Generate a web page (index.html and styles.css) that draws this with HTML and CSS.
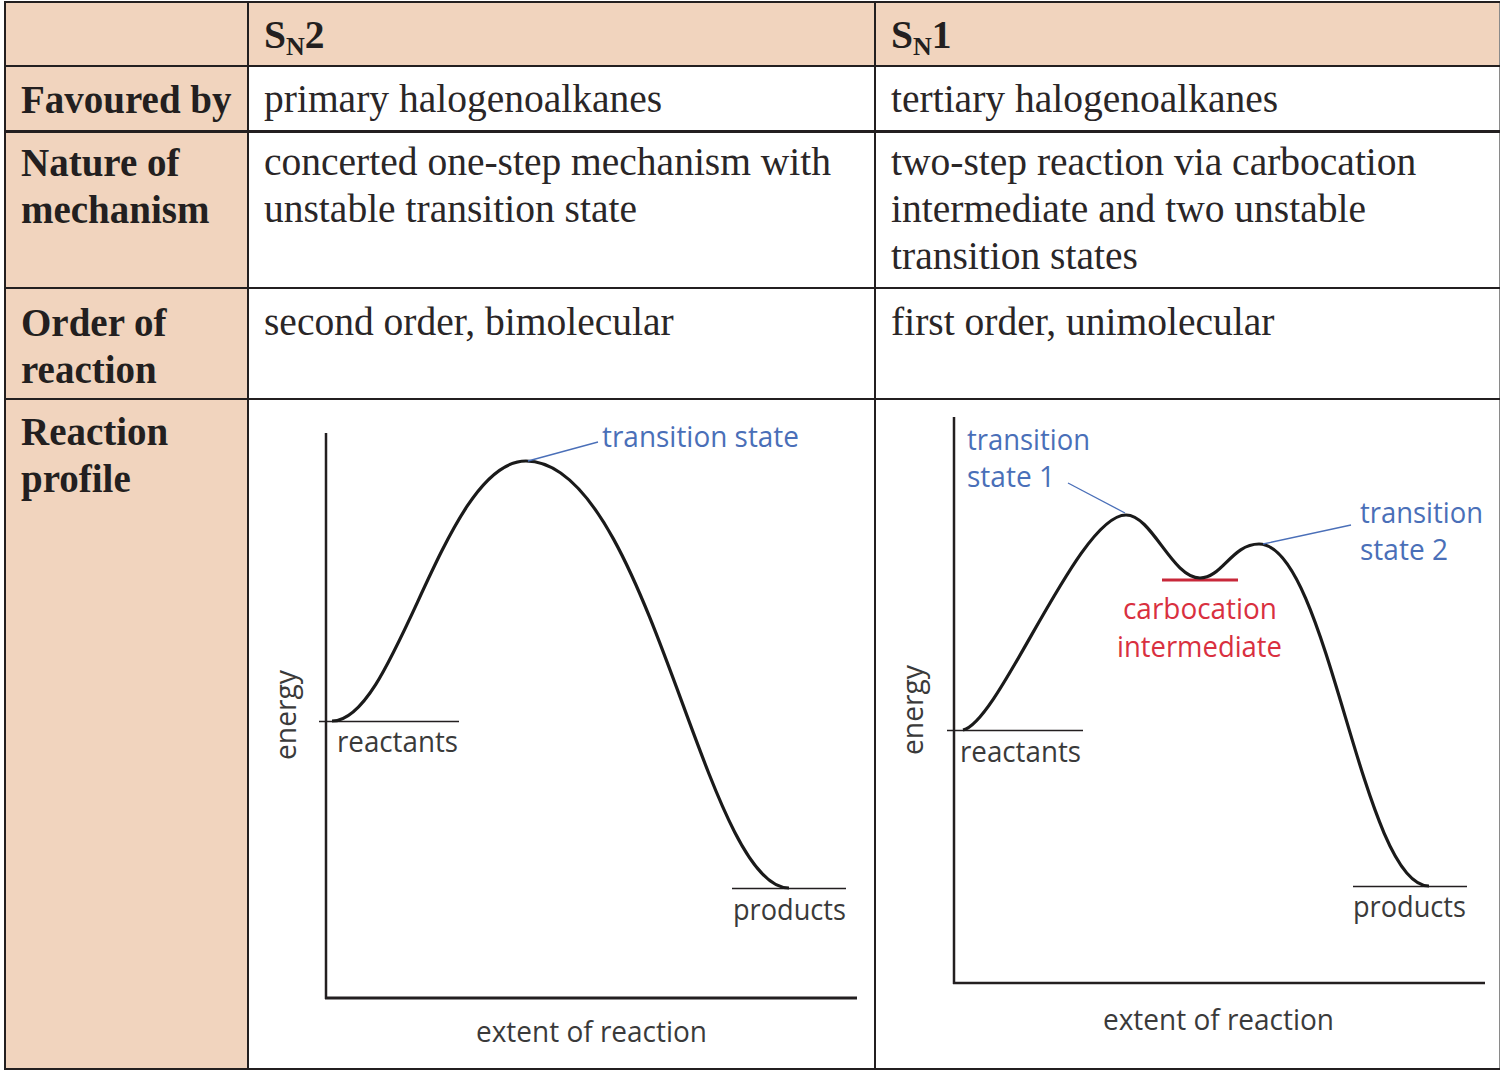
FILE: index.html
```html
<!DOCTYPE html>
<html>
<head>
<meta charset="utf-8">
<link rel="stylesheet" href="styles.css">
</head>
<body>
<table class="cmp">
  <colgroup><col class="c1"><col class="c2"><col class="c3"></colgroup>
  <tr class="r-head">
    <th class="lab"></th>
    <th class="hd">S<sub>N</sub>2</th>
    <th class="hd">S<sub>N</sub>1</th>
  </tr>
  <tr class="r-fav">
    <th class="lab">Favoured by</th>
    <td>primary halogenoalkanes</td>
    <td>tertiary halogenoalkanes</td>
  </tr>
  <tr class="r-nat">
    <th class="lab">Nature of<br>mechanism</th>
    <td>concerted one-step mechanism with<br>unstable transition state</td>
    <td>two-step reaction via carbocation<br>intermediate and two unstable<br>transition states</td>
  </tr>
  <tr class="r-ord">
    <th class="lab">Order of<br>reaction</th>
    <td>second order, bimolecular</td>
    <td>first order, unimolecular</td>
  </tr>
  <tr class="r-prof">
    <th class="lab">Reaction<br>profile</th>
    <td class="graph">
      <svg class="plot" width="625" height="668" viewBox="250 400 625 668">
        <line class="axis" x1="327" y1="433" x2="327" y2="999"/>
        <line class="axis xax" x1="326" y1="998" x2="858" y2="998"/>
        <line class="level" x1="320" y1="721.5" x2="460" y2="721.5"/>
        <line class="level" x1="733" y1="888.5" x2="847" y2="888.5"/>
        <path class="curve" d="M333,721 C398,721 445,461 527,461 C650,461 705,888 790,888"/>
        <line class="lead" x1="529" y1="461" x2="599" y2="442"/>
        <text class="lbl blue" x="603" y="447" textLength="197" lengthAdjust="spacingAndGlyphs">transition state</text>
        <text class="lbl" x="338" y="752" textLength="121" lengthAdjust="spacingAndGlyphs">reactants</text>
        <text class="lbl" x="734" y="920" textLength="113" lengthAdjust="spacingAndGlyphs">products</text>
        <text class="lbl" x="477" y="1042" textLength="231" lengthAdjust="spacingAndGlyphs">extent of reaction</text>
        <text class="lbl" transform="translate(297,760) rotate(-90)" textLength="90" lengthAdjust="spacingAndGlyphs">energy</text>
      </svg>
    </td>
    <td class="graph">
      <svg class="plot" width="623" height="668" viewBox="876 400 623 668">
        <line class="axis" x1="954" y1="417" x2="954" y2="984"/>
        <line class="axis" x1="953" y1="983" x2="1485" y2="983"/>
        <line class="level" x1="947" y1="730.5" x2="1083" y2="730.5"/>
        <line class="level" x1="1353" y1="886.5" x2="1467" y2="886.5"/>
        <line class="inter" x1="1162" y1="580" x2="1238" y2="580"/>
        <path class="curve" d="M963,730 C1000,722 1078,515 1126,515 C1152,515 1172,578 1200,578 C1222,578 1232,544 1259,544 C1328,544 1362,886 1429,886"/>
        <line class="lead" x1="1068" y1="483" x2="1125" y2="513"/>
        <line class="lead" x1="1351" y1="525" x2="1263" y2="544"/>
        <text class="lbl blue" x="967" y="450" textLength="123" lengthAdjust="spacingAndGlyphs">transition</text>
        <text class="lbl blue" x="967" y="487" textLength="88" lengthAdjust="spacingAndGlyphs">state 1</text>
        <text class="lbl blue" x="1360" y="523" textLength="123" lengthAdjust="spacingAndGlyphs">transition</text>
        <text class="lbl blue" x="1360" y="560" textLength="88" lengthAdjust="spacingAndGlyphs">state 2</text>
        <text class="lbl red" x="1123" y="619" textLength="154" lengthAdjust="spacingAndGlyphs">carbocation</text>
        <text class="lbl red" x="1117" y="657" textLength="165" lengthAdjust="spacingAndGlyphs">intermediate</text>
        <text class="lbl" x="960" y="762" textLength="121" lengthAdjust="spacingAndGlyphs">reactants</text>
        <text class="lbl" x="1353" y="917" textLength="113" lengthAdjust="spacingAndGlyphs">products</text>
        <text class="lbl" x="1103" y="1030" textLength="231" lengthAdjust="spacingAndGlyphs">extent of reaction</text>
        <text class="lbl" transform="translate(923,755) rotate(-90)" textLength="90" lengthAdjust="spacingAndGlyphs">energy</text>
      </svg>
    </td>
  </tr>
</table>
</body>
</html>
```
FILE: styles.css
```css
html, body {
  margin: 0;
  padding: 0;
  background: #ffffff;
}
body {
  padding: 1px 0 0 4px;
}
.cmp {
  border-collapse: collapse;
  font-family: "Liberation Serif", "Times New Roman", serif;
  font-size: 39.5px;
  line-height: 47px;
  color: #2a2627;
  border-top: 2px solid #231f20;
  border-left: 2px solid #231f20;
  border-right: 1px solid #8a8a8a;
  border-bottom: 2px solid #231f20;
}
.c1 { width: 244px; }
.c2 { width: 626px; }
.c3 { width: 623px; }
.cmp th, .cmp td {
  box-sizing: border-box;
  border: 2px solid #231f20;
  text-align: left;
  vertical-align: top;
  padding: 8px 15px 0 15px;
  font-weight: normal;
  white-space: nowrap;
}
.cmp th.lab, .cmp th.hd {
  font-weight: bold;
  color: #231f20;
  background: #f1d4be;
}
.cmp th.lab {
  padding-left: 15px;
  font-size: 39px;
}
.cmp td {
  background: #ffffff;
}
.cmp th:last-child, .cmp td:last-child {
  border-right: 1px solid #8a8a8a;
}
.hd sub {
  font-size: 26px;
  vertical-align: -7px;
  line-height: 0;
}
.r-head th { height: 64px; padding-top: 9px; }
.r-fav th, .r-fav td { height: 65px; padding-top: 9px; border-bottom: 3px solid #231f20; }
.r-nat th, .r-nat td { height: 157px; padding-top: 6px; }
.r-ord th, .r-ord td { height: 111px; padding-top: 10px; }
.r-prof th { height: 669px; padding-top: 8px; }
.cmp td.graph {
  padding: 0;
  height: 669px;
}
.plot {
  display: block;
}
.axis {
  stroke: #231f20;
  stroke-width: 2.5;
}
.xax {
  stroke-width: 3;
}
.level {
  stroke: #231f20;
  stroke-width: 1.4;
}
.inter {
  stroke: #c8283a;
  stroke-width: 3;
}
.curve {
  fill: none;
  stroke: #1a1a1a;
  stroke-width: 3.2;
}
.lead {
  stroke: #4a6fb8;
  stroke-width: 1.3;
}
.lbl {
  font-family: "Open Sans", "DejaVu Sans", sans-serif;
  font-size: 30px;
  fill: #3a3a3a;
}
.blue { fill: #4a6fb8; }
.red { fill: #d9303f; }
```
